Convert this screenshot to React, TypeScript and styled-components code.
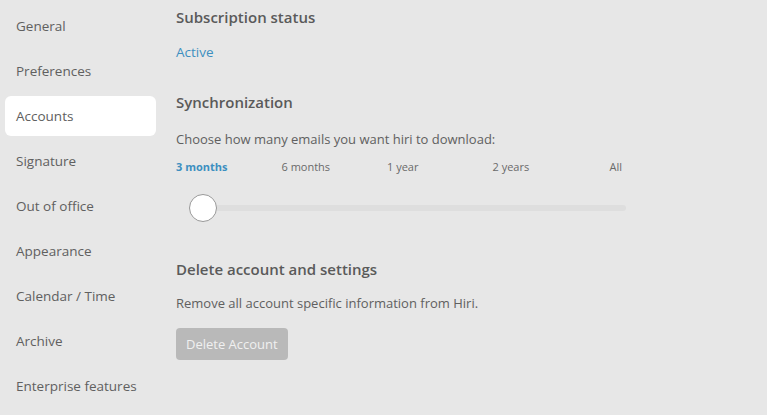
import styled, { createGlobalStyle } from "styled-components";

const GlobalStyle = createGlobalStyle`
  html, body {
    margin: 0;
    padding: 0;
    background: #e7e7e7;
  }
  body {
    font-family: "Open Sans", "Noto Sans", sans-serif;
    color: #5f5f5f;
  }
`;

const Page = styled.div`
  display: flex;
  width: 767px;
  height: 415px;
  background: #e7e7e7;
  overflow: hidden;
`;

const Sidebar = styled.nav`
  width: 151px;
  padding: 6px 0 0 5px;
  display: flex;
  flex-direction: column;
  gap: 5px;
`;

const NavItem = styled.div<{ $active?: boolean }>`
  height: 40px;
  display: flex;
  align-items: center;
  padding-left: 11px;
  font-size: 13.5px;
  color: #606060;
  border-radius: 6px;
  background: ${({ $active }) => ($active ? "#ffffff" : "transparent")};
`;

const Content = styled.main`
  flex: 1;
  padding: 6px 0 0 20px;
`;

const Section = styled.section`
  margin-bottom: 30px;
`;

const Heading = styled.h2`
  margin: 0;
  font-size: 15px;
  font-weight: 600;
  color: #5a5a5a;
  line-height: 22px;
`;

const StatusText = styled.div`
  margin-top: 15px;
  font-size: 13.5px;
  color: #3d8fc0;
`;

const Text = styled.p<{ $gap?: number }>`
  margin: ${({ $gap }) => $gap ?? 13}px 0 0;
  font-size: 13px;
  line-height: 20px;
  color: #606060;
`;

const Periods = styled.div`
  width: 446px;
  display: flex;
  margin-top: 10px;
`;

const Period = styled.span<{ $active?: boolean }>`
  width: 105.5px;
  font-size: 11px;
  font-weight: ${({ $active }) => ($active ? 700 : 400)};
  color: ${({ $active }) => ($active ? "#3d8fc0" : "#6a6a6a")};

  &:last-child {
    width: auto;
    margin-left: auto;
  }
`;

const SliderWrap = styled.div`
  position: relative;
  width: 437px;
  height: 28px;
  margin: 20px 0 0 13px;
  display: flex;
  align-items: center;
`;

const Track = styled.div`
  width: 100%;
  height: 6px;
  border-radius: 3px;
  background: #dedede;
`;

const Thumb = styled.div`
  position: absolute;
  left: 0;
  top: 0;
  box-sizing: border-box;
  width: 28px;
  height: 28px;
  border-radius: 50%;
  background: #ffffff;
  border: 1.5px solid #999999;
`;

const DeleteSection = styled(Section)`
  margin-top: 36px;
`;

const DangerButton = styled.button`
  margin-top: 15px;
  height: 32px;
  padding: 0 10px;
  border: none;
  border-radius: 4px;
  background: #b9b9b9;
  color: #f0f0f0;
  font-family: inherit;
  font-size: 13px;
`;

const navItems = [
  "General",
  "Preferences",
  "Accounts",
  "Signature",
  "Out of office",
  "Appearance",
  "Calendar / Time",
  "Archive",
  "Enterprise features",
];

const periods = ["3 months", "6 months", "1 year", "2 years", "All"];

export default function App() {
  return (
    <>
      <GlobalStyle />
      <Page>
        <Sidebar>
          {navItems.map((item) => (
            <NavItem key={item} $active={item === "Accounts"}>
              {item}
            </NavItem>
          ))}
        </Sidebar>
        <Content>
          <Section>
            <Heading>Subscription status</Heading>
            <StatusText>Active</StatusText>
          </Section>
          <Section>
            <Heading>Synchronization</Heading>
            <Text $gap={16}>Choose how many emails you want hiri to download:</Text>
            <Periods>
              {periods.map((p, i) => (
                <Period key={p} $active={i === 0}>
                  {p}
                </Period>
              ))}
            </Periods>
            <SliderWrap>
              <Track />
              <Thumb />
            </SliderWrap>
          </Section>
          <DeleteSection>
            <Heading>Delete account and settings</Heading>
            <Text>Remove all account specific information from Hiri.</Text>
            <DangerButton>Delete Account</DangerButton>
          </DeleteSection>
        </Content>
      </Page>
    </>
  );
}
